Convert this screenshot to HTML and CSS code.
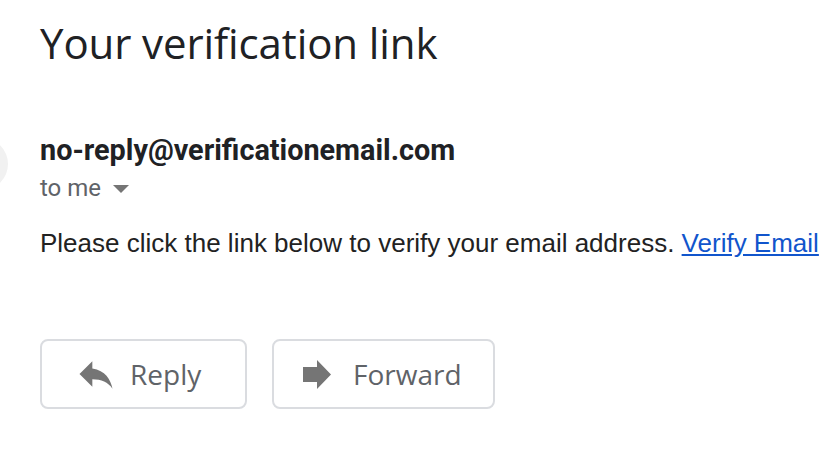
FILE: index.html
```html
<!DOCTYPE html>
<html>
<head>
<meta charset="utf-8">
<link rel="stylesheet" href="styles.css">
</head>
<body>
<div class="page">
  <h1 class="subject">Your verification link</h1>
  <div class="message">
    <div class="header">
      <div class="avatar"></div>
      <div class="meta">
        <div class="sender">no-reply@verificationemail.com</div>
        <div class="recipient">to me <span class="caret"></span></div>
      </div>
    </div>
    <p class="body-text">Please click the link below to verify your email address. <a href="#" class="link">Verify Email</a></p>
    <div class="actions">
      <button class="btn btn-reply">
        <svg class="icon icon-reply" viewBox="0 0 24 24" width="44" height="44"><path d="M10 9V5l-7 7 7 7v-4.1c5 0 8.5 1.6 11 5.1-1-5-4-10-11-11z" fill="#757575"/></svg>
        <span>Reply</span>
      </button>
      <button class="btn btn-forward">
        <svg class="icon icon-forward" viewBox="0 0 28 29" width="28" height="29"><path d="M0 7h14V0l14 14.5L14 29v-7H0z" fill="#757575"/></svg>
        <span>Forward</span>
      </button>
    </div>
  </div>
</div>
</body>
</html>
```

FILE: styles.css
```css
html, body {
  margin: 0;
  padding: 0;
  background: #ffffff;
  overflow: hidden;
}

.page {
  padding-left: 40px;
  width: 800px;
  height: 472px;
}

.subject {
  margin: 0;
  padding-top: 17px;
  font-family: "Open Sans", Roboto, sans-serif;
  font-weight: 400;
  font-size: 42px;
  line-height: 52px;
  color: #202124;
  letter-spacing: -0.1px;
}

.header {
  display: flex;
  align-items: flex-start;
  margin-left: -84px;
  margin-top: 63px;
  gap: 32px;
}

.avatar {
  width: 52px;
  height: 52px;
  border-radius: 50%;
  background: #f1f1f1;
  flex: none;
  margin-top: 6px;
}

.meta {
  display: flex;
  flex-direction: column;
}

.sender {
  font-family: Roboto, "Liberation Sans", sans-serif;
  font-weight: 700;
  font-size: 28.8px;
  line-height: 36px;
  color: #202124;
}

.recipient {
  font-family: Roboto, "Liberation Sans", sans-serif;
  font-size: 24px;
  line-height: 34px;
  margin-top: 3px;
  color: #5f6368;
  display: flex;
  align-items: center;
}

.caret {
  width: 0;
  height: 0;
  border-left: 8px solid transparent;
  border-right: 8px solid transparent;
  border-top: 8px solid #757575;
  margin-left: 12px;
  margin-top: 2px;
}

.body-text {
  margin: 20px 0 0 0;
  font-family: "Liberation Sans", Arial, sans-serif;
  font-size: 26px;
  line-height: 36px;
  color: #222222;
  white-space: nowrap;
}

.link {
  color: #1155cc;
  text-decoration: underline;
}

.actions {
  display: flex;
  gap: 25px;
  margin-top: 78px;
}

.btn {
  display: flex;
  align-items: center;
  height: 70px;
  box-sizing: border-box;
  border: 2px solid #dadce0;
  border-radius: 8px;
  background: #ffffff;
  font-family: "Open Sans", Roboto, sans-serif;
  font-size: 28px;
  color: #5f6368;
  padding: 0;
}

.btn-reply {
  width: 207px;
  padding-left: 32px;
}

.btn-forward {
  width: 223px;
  padding-left: 29px;
}

.icon-reply {
  margin-right: 12px;
}

.icon-forward {
  margin-right: 22px;
}
```
